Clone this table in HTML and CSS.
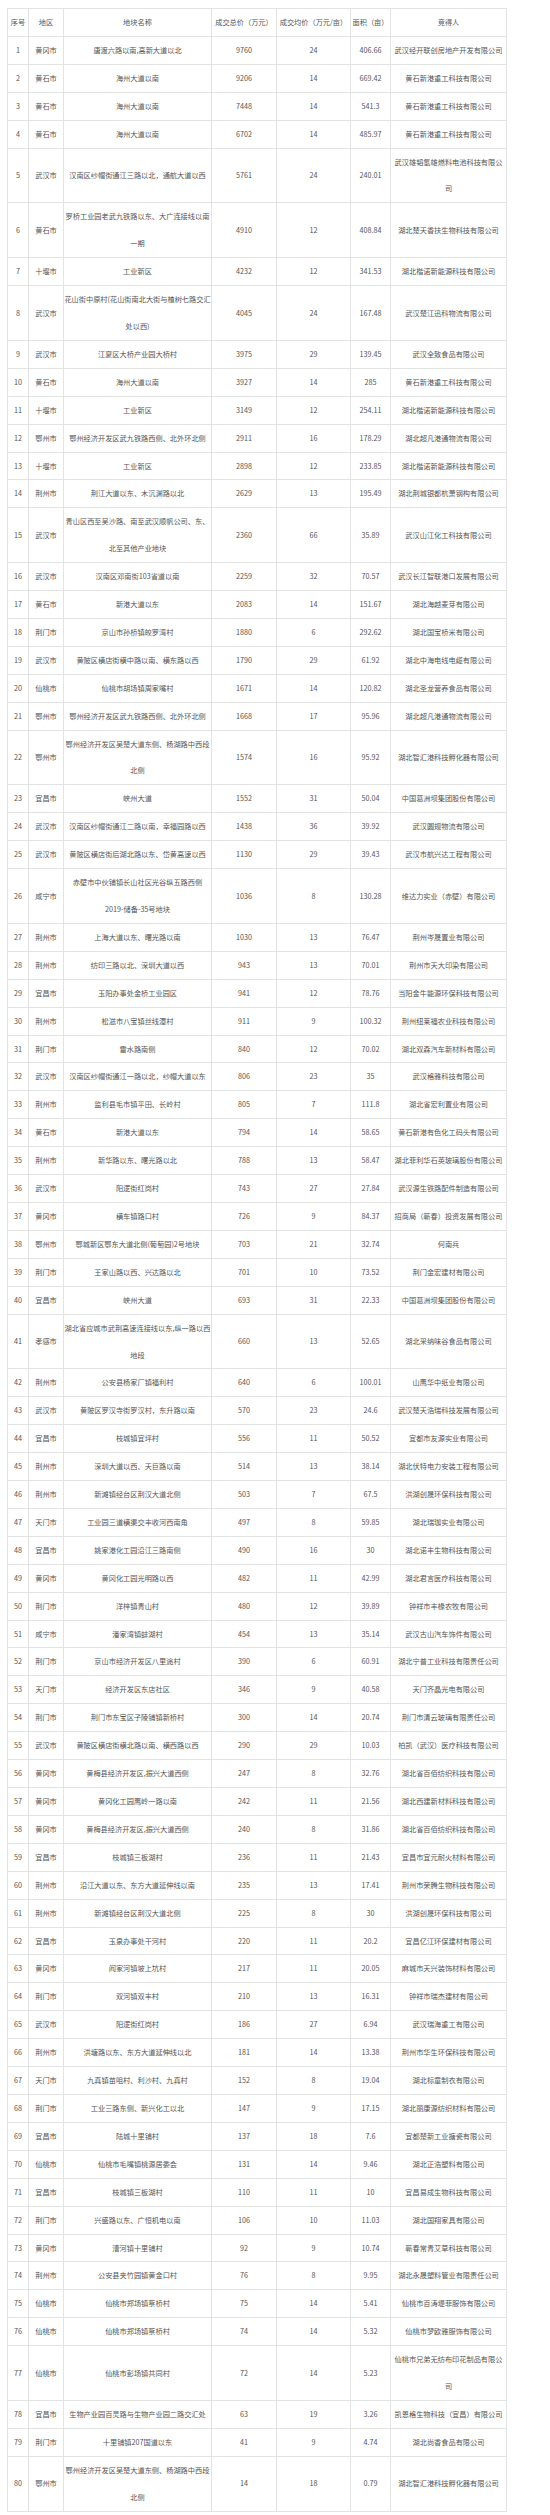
FILE: index.html
```html
<!DOCTYPE html>
<html lang="zh-CN">
<head>
<meta charset="utf-8">
<title>土地成交</title>
<link rel="stylesheet" href="styles.css">
</head>
<body>
<div class="page">
<table class="deal-table">
<colgroup>
<col class="c-no"><col class="c-area"><col class="c-name"><col class="c-total"><col class="c-avg"><col class="c-size"><col class="c-buyer">
</colgroup>
<thead>
<tr><th>序号</th><th>地区</th><th>地块名称</th><th>成交总价（万元）</th><th>成交均价（万元/亩）</th><th>面积（亩）</th><th class="buyer">竞得人</th></tr>
</thead>
<tbody>
<tr><td>1</td><td>黄冈市</td><td>唐渡六路以南,高新大道以北</td><td>9760</td><td>24</td><td>406.66</td><td class="buyer">武汉经开联创房地产开发有限公司</td></tr>
<tr><td>2</td><td>黄石市</td><td>海州大道以南</td><td>9206</td><td>14</td><td>669.42</td><td class="buyer">黄石新港重工科技有限公司</td></tr>
<tr><td>3</td><td>黄石市</td><td>海州大道以南</td><td>7448</td><td>14</td><td>541.3</td><td class="buyer">黄石新港重工科技有限公司</td></tr>
<tr><td>4</td><td>黄石市</td><td>海州大道以南</td><td>6702</td><td>14</td><td>485.97</td><td class="buyer">黄石新港重工科技有限公司</td></tr>
<tr><td>5</td><td>武汉市</td><td>汉南区纱帽街通江三路以北，通航大道以西</td><td>5761</td><td>24</td><td>240.01</td><td class="buyer">武汉雄韬氢雄燃料电池科技有限公司</td></tr>
<tr><td>6</td><td>黄石市</td><td>罗桥工业园老武九铁路以东、大广连接线以南一期</td><td>4910</td><td>12</td><td>408.84</td><td class="buyer">湖北楚天香扶生物科技有限公司</td></tr>
<tr><td>7</td><td>十堰市</td><td>工业新区</td><td>4232</td><td>12</td><td>341.53</td><td class="buyer">湖北楷诺新能源科技有限公司</td></tr>
<tr><td>8</td><td>武汉市</td><td>花山街中原村(花山街南北大街与楂树七路交汇处以西)</td><td>4045</td><td>24</td><td>167.48</td><td class="buyer">武汉楚江迅科物流有限公司</td></tr>
<tr><td>9</td><td>武汉市</td><td>江夏区大桥产业园大桥村</td><td>3975</td><td>29</td><td>139.45</td><td class="buyer">武汉全致食品有限公司</td></tr>
<tr><td>10</td><td>黄石市</td><td>海州大道以南</td><td>3927</td><td>14</td><td>285</td><td class="buyer">黄石新港重工科技有限公司</td></tr>
<tr><td>11</td><td>十堰市</td><td>工业新区</td><td>3149</td><td>12</td><td>254.11</td><td class="buyer">湖北楷诺新能源科技有限公司</td></tr>
<tr><td>12</td><td>鄂州市</td><td>鄂州经济开发区武九铁路西侧、北外环北侧</td><td>2911</td><td>16</td><td>178.29</td><td class="buyer">湖北超凡港通物流有限公司</td></tr>
<tr><td>13</td><td>十堰市</td><td>工业新区</td><td>2898</td><td>12</td><td>233.85</td><td class="buyer">湖北楷诺新能源科技有限公司</td></tr>
<tr><td>14</td><td>荆州市</td><td>荆江大道以东、木沉渊路以北</td><td>2629</td><td>13</td><td>195.49</td><td class="buyer">湖北荆城银都杭萧钢构有限公司</td></tr>
<tr><td>15</td><td>武汉市</td><td>青山区西至吴沙路、南至武汉顺帆公司、东、北至其他产业地块</td><td>2360</td><td>66</td><td>35.89</td><td class="buyer">武汉山江化工科技有限公司</td></tr>
<tr><td>16</td><td>武汉市</td><td>汉南区邓南街103省道以南</td><td>2259</td><td>32</td><td>70.57</td><td class="buyer">武汉长江智联港口发展有限公司</td></tr>
<tr><td>17</td><td>黄石市</td><td>新港大道以东</td><td>2083</td><td>14</td><td>151.67</td><td class="buyer">湖北海越麦芽有限公司</td></tr>
<tr><td>18</td><td>荆门市</td><td>京山市孙桥镇皎罗湾村</td><td>1880</td><td>6</td><td>292.62</td><td class="buyer">湖北国宝桥米有限公司</td></tr>
<tr><td>19</td><td>武汉市</td><td>黄陂区横店街横中路以南、横东路以西</td><td>1790</td><td>29</td><td>61.92</td><td class="buyer">湖北中海电线电缆有限公司</td></tr>
<tr><td>20</td><td>仙桃市</td><td>仙桃市胡场镇周家嘴村</td><td>1671</td><td>14</td><td>120.82</td><td class="buyer">湖北圣龙营养食品有限公司</td></tr>
<tr><td>21</td><td>鄂州市</td><td>鄂州经济开发区武九铁路西侧、北外环北侧</td><td>1668</td><td>17</td><td>95.96</td><td class="buyer">湖北超凡港通物流有限公司</td></tr>
<tr><td>22</td><td>鄂州市</td><td>鄂州经济开发区吴楚大道东侧、杨湖路中西段北侧</td><td>1574</td><td>16</td><td>95.92</td><td class="buyer">湖北智汇港科技孵化器有限公司</td></tr>
<tr><td>23</td><td>宜昌市</td><td>峡州大道</td><td>1552</td><td>31</td><td>50.04</td><td class="buyer">中国葛洲坝集团股份有限公司</td></tr>
<tr><td>24</td><td>武汉市</td><td>汉南区纱帽街通江二路以南，幸福园路以西</td><td>1438</td><td>36</td><td>39.92</td><td class="buyer">武汉圆规物流有限公司</td></tr>
<tr><td>25</td><td>武汉市</td><td>黄陂区横店街后湖北路以东、岱黄高速以西</td><td>1130</td><td>29</td><td>39.43</td><td class="buyer">武汉市航兴达工程有限公司</td></tr>
<tr><td>26</td><td>咸宁市</td><td>赤壁市中伙铺镇长山社区光谷纵五路西侧2019-储备-35号地块</td><td>1036</td><td>8</td><td>130.28</td><td class="buyer">维达力实业（赤壁）有限公司</td></tr>
<tr><td>27</td><td>荆州市</td><td>上海大道以东、曙光路以南</td><td>1030</td><td>13</td><td>76.47</td><td class="buyer">荆州岑晟置业有限公司</td></tr>
<tr><td>28</td><td>荆州市</td><td>纺印三路以北、深圳大道以西</td><td>943</td><td>13</td><td>70.01</td><td class="buyer">荆州市天大印染有限公司</td></tr>
<tr><td>29</td><td>宜昌市</td><td>玉阳办事处金桥工业园区</td><td>941</td><td>12</td><td>78.76</td><td class="buyer">当阳金牛能源环保科技有限公司</td></tr>
<tr><td>30</td><td>荆州市</td><td>松滋市八宝镇丝线潭村</td><td>911</td><td>9</td><td>100.32</td><td class="buyer">荆州纽莱福农业科技有限公司</td></tr>
<tr><td>31</td><td>荆门市</td><td>雷水路南侧</td><td>840</td><td>12</td><td>70.02</td><td class="buyer">湖北双森汽车新材料有限公司</td></tr>
<tr><td>32</td><td>武汉市</td><td>汉南区纱帽街通江一路以北，纱帽大道以东</td><td>806</td><td>23</td><td>35</td><td class="buyer">武汉格雅科技有限公司</td></tr>
<tr><td>33</td><td>荆州市</td><td>监利县毛市镇平田、长岭村</td><td>805</td><td>7</td><td>111.8</td><td class="buyer">湖北省宏利置业有限公司</td></tr>
<tr><td>34</td><td>黄石市</td><td>新港大道以东</td><td>794</td><td>14</td><td>58.65</td><td class="buyer">黄石新港有色化工码头有限公司</td></tr>
<tr><td>35</td><td>荆州市</td><td>新华路以东、曙光路以北</td><td>788</td><td>13</td><td>58.47</td><td class="buyer">湖北菲利华石英玻璃股份有限公司</td></tr>
<tr><td>36</td><td>武汉市</td><td>阳逻街红岗村</td><td>743</td><td>27</td><td>27.84</td><td class="buyer">武汉源生铁路配件制造有限公司</td></tr>
<tr><td>37</td><td>黄冈市</td><td>横车镇路口村</td><td>726</td><td>9</td><td>84.37</td><td class="buyer">招商局（蕲春）投资发展有限公司</td></tr>
<tr><td>38</td><td>鄂州市</td><td>鄂城新区鄂东大道北侧(葡萄园)2号地块</td><td>703</td><td>21</td><td>32.74</td><td class="buyer">何南兵</td></tr>
<tr><td>39</td><td>荆门市</td><td>王家山路以西、兴达路以北</td><td>701</td><td>10</td><td>73.52</td><td class="buyer">荆门金宏建材有限公司</td></tr>
<tr><td>40</td><td>宜昌市</td><td>峡州大道</td><td>693</td><td>31</td><td>22.33</td><td class="buyer">中国葛洲坝集团股份有限公司</td></tr>
<tr><td>41</td><td>孝感市</td><td>湖北省应城市武荆高速连接线以东,纵一路以西地段</td><td>660</td><td>13</td><td>52.65</td><td class="buyer">湖北采纳味谷食品有限公司</td></tr>
<tr><td>42</td><td>荆州市</td><td>公安县杨家厂镇福利村</td><td>640</td><td>6</td><td>100.01</td><td class="buyer">山鹰华中纸业有限公司</td></tr>
<tr><td>43</td><td>武汉市</td><td>黄陂区罗汉寺街罗汉村，东升路以南</td><td>570</td><td>23</td><td>24.6</td><td class="buyer">武汉楚天浩瑞科技发展有限公司</td></tr>
<tr><td>44</td><td>宜昌市</td><td>枝城镇宜坪村</td><td>556</td><td>11</td><td>50.52</td><td class="buyer">宜都市友源实业有限公司</td></tr>
<tr><td>45</td><td>荆州市</td><td>深圳大道以西、天巨路以南</td><td>514</td><td>13</td><td>38.14</td><td class="buyer">湖北伏特电力安装工程有限公司</td></tr>
<tr><td>46</td><td>荆州市</td><td>新滩镇经台区荆汉大道北侧</td><td>503</td><td>7</td><td>67.5</td><td class="buyer">洪湖创晟环保科技有限公司</td></tr>
<tr><td>47</td><td>天门市</td><td>工业园三道横渠交丰收河西南角</td><td>497</td><td>8</td><td>59.85</td><td class="buyer">湖北瑞珈实业有限公司</td></tr>
<tr><td>48</td><td>宜昌市</td><td>姚家港化工园沿江三路南侧</td><td>490</td><td>16</td><td>30</td><td class="buyer">湖北诺丰生物科技有限公司</td></tr>
<tr><td>49</td><td>黄冈市</td><td>黄冈化工园光明路以西</td><td>482</td><td>11</td><td>42.99</td><td class="buyer">湖北君言医疗科技有限公司</td></tr>
<tr><td>50</td><td>荆门市</td><td>洋梓镇青山村</td><td>480</td><td>12</td><td>39.89</td><td class="buyer">钟祥市丰椽农牧有限公司</td></tr>
<tr><td>51</td><td>咸宁市</td><td>潘家湾镇蚌湖村</td><td>454</td><td>13</td><td>35.14</td><td class="buyer">武汉古山汽车饰件有限公司</td></tr>
<tr><td>52</td><td>荆门市</td><td>京山市经济开发区八里途村</td><td>390</td><td>6</td><td>60.91</td><td class="buyer">湖北宁普工业科技有限责任公司</td></tr>
<tr><td>53</td><td>天门市</td><td>经济开发区东店社区</td><td>346</td><td>9</td><td>40.58</td><td class="buyer">天门齐晶光电有限公司</td></tr>
<tr><td>54</td><td>荆门市</td><td>荆门市东宝区子陵铺镇新桥村</td><td>300</td><td>14</td><td>20.74</td><td class="buyer">荆门市清云玻璃有限责任公司</td></tr>
<tr><td>55</td><td>武汉市</td><td>黄陂区横店街横北路以南、横西路以西</td><td>290</td><td>29</td><td>10.03</td><td class="buyer">柏凯（武汉）医疗科技有限公司</td></tr>
<tr><td>56</td><td>黄冈市</td><td>黄梅县经济开发区,振兴大道西侧</td><td>247</td><td>8</td><td>32.76</td><td class="buyer">湖北省百佰纺织科技有限公司</td></tr>
<tr><td>57</td><td>黄冈市</td><td>黄冈化工园鹰岭一路以南</td><td>242</td><td>11</td><td>21.56</td><td class="buyer">湖北西建新材料科技有限公司</td></tr>
<tr><td>58</td><td>黄冈市</td><td>黄梅县经济开发区,振兴大道西侧</td><td>240</td><td>8</td><td>31.86</td><td class="buyer">湖北省百佰纺织科技有限公司</td></tr>
<tr><td>59</td><td>宜昌市</td><td>枝城镇三板湖村</td><td>236</td><td>11</td><td>21.43</td><td class="buyer">宜昌市宜元耐火材料有限公司</td></tr>
<tr><td>60</td><td>荆州市</td><td>沿江大道以东、东方大道延伸线以南</td><td>235</td><td>13</td><td>17.41</td><td class="buyer">荆州市荣腾生物科技有限公司</td></tr>
<tr><td>61</td><td>荆州市</td><td>新滩镇经台区荆汉大道北侧</td><td>225</td><td>8</td><td>30</td><td class="buyer">洪湖创晟环保科技有限公司</td></tr>
<tr><td>62</td><td>宜昌市</td><td>玉泉办事处干河村</td><td>220</td><td>11</td><td>20.2</td><td class="buyer">宜昌亿江环保建材有限公司</td></tr>
<tr><td>63</td><td>黄冈市</td><td>阎家河镇坡上坑村</td><td>217</td><td>11</td><td>20.05</td><td class="buyer">麻城市天兴装饰材料有限公司</td></tr>
<tr><td>64</td><td>荆门市</td><td>双河镇双丰村</td><td>210</td><td>13</td><td>16.31</td><td class="buyer">钟祥市瑞杰建材有限公司</td></tr>
<tr><td>65</td><td>武汉市</td><td>阳逻街红岗村</td><td>186</td><td>27</td><td>6.94</td><td class="buyer">武汉瑞海重工有限公司</td></tr>
<tr><td>66</td><td>荆州市</td><td>洪塘路以东、东方大道延伸线以北</td><td>181</td><td>14</td><td>13.38</td><td class="buyer">荆州市华生环保科技有限公司</td></tr>
<tr><td>67</td><td>天门市</td><td>九真镇苗咀村、利沙村、九真村</td><td>152</td><td>8</td><td>19.04</td><td class="buyer">湖北标童制衣有限公司</td></tr>
<tr><td>68</td><td>荆门市</td><td>工业三路东侧、新兴化工以北</td><td>147</td><td>9</td><td>17.15</td><td class="buyer">湖北丽康源纺织材料有限公司</td></tr>
<tr><td>69</td><td>宜昌市</td><td>陆城十里铺村</td><td>137</td><td>18</td><td>7.6</td><td class="buyer">宜都楚新工业搪瓷有限公司</td></tr>
<tr><td>70</td><td>仙桃市</td><td>仙桃市毛嘴镇桃源居委会</td><td>131</td><td>14</td><td>9.46</td><td class="buyer">湖北正浩塑料有限公司</td></tr>
<tr><td>71</td><td>宜昌市</td><td>枝城镇三板湖村</td><td>110</td><td>11</td><td>10</td><td class="buyer">宜昌易成生物科技有限公司</td></tr>
<tr><td>72</td><td>荆门市</td><td>兴盛路以东、广恒机电以南</td><td>106</td><td>10</td><td>11.03</td><td class="buyer">湖北国翔家具有限公司</td></tr>
<tr><td>73</td><td>黄冈市</td><td>漕河镇十里铺村</td><td>92</td><td>9</td><td>10.74</td><td class="buyer">蕲春常青艾草科技有限公司</td></tr>
<tr><td>74</td><td>荆州市</td><td>公安县夹竹园镇黄金口村</td><td>76</td><td>8</td><td>9.95</td><td class="buyer">湖北永晟塑料管业有限责任公司</td></tr>
<tr><td>75</td><td>仙桃市</td><td>仙桃市郑场镇蔡桥村</td><td>75</td><td>14</td><td>5.41</td><td class="buyer">仙桃市百涛堤菲服饰有限公司</td></tr>
<tr><td>76</td><td>仙桃市</td><td>仙桃市郑场镇蔡桥村</td><td>74</td><td>14</td><td>5.32</td><td class="buyer">仙桃市梦欧雅服饰有限公司</td></tr>
<tr><td>77</td><td>仙桃市</td><td>仙桃市彭场镇共同村</td><td>72</td><td>14</td><td>5.23</td><td class="buyer">仙桃市兄弟无纺布印花制品有限公司</td></tr>
<tr><td>78</td><td>宜昌市</td><td>生物产业园百灵路与生物产业园二路交汇处</td><td>63</td><td>19</td><td>3.26</td><td class="buyer">凯恩格生物科技（宜昌）有限公司</td></tr>
<tr><td>79</td><td>荆门市</td><td>十里铺镇207国道以东</td><td>41</td><td>9</td><td>4.74</td><td class="buyer">湖北尚香食品有限公司</td></tr>
<tr><td>80</td><td>鄂州市</td><td>鄂州经济开发区吴楚大道东侧、杨湖路中西段北侧</td><td>14</td><td>18</td><td>0.79</td><td class="buyer">湖北智汇港科技孵化器有限公司</td></tr>
</tbody>
</table>
</div>
</body>
</html>
```

FILE: styles.css
```css
html, body {
  margin: 0;
  padding: 0;
  background: #ffffff;
}

.page {
  padding: 8px 0 0 7px;
}

.deal-table {
  border-collapse: collapse;
  table-layout: fixed;
  width: 499px;
  font-family: "Noto Sans CJK SC", sans-serif;
  font-size: 7.2px;
  line-height: 26.9px;
  color: #555555;
}

.c-no { width: 21px; }
.c-area { width: 35px; }
.c-name { width: 148px; }
.c-total { width: 65px; }
.c-avg { width: 74px; }
.c-size { width: 40px; }
.c-buyer { width: 116px; }

.deal-table th,
.deal-table td {
  border: 1px solid #e3e3e3;
  padding: 0;
  text-align: center;
  vertical-align: middle;
  font-weight: normal;
}

.deal-table .buyer {
  padding: 0 2px;
}
```
